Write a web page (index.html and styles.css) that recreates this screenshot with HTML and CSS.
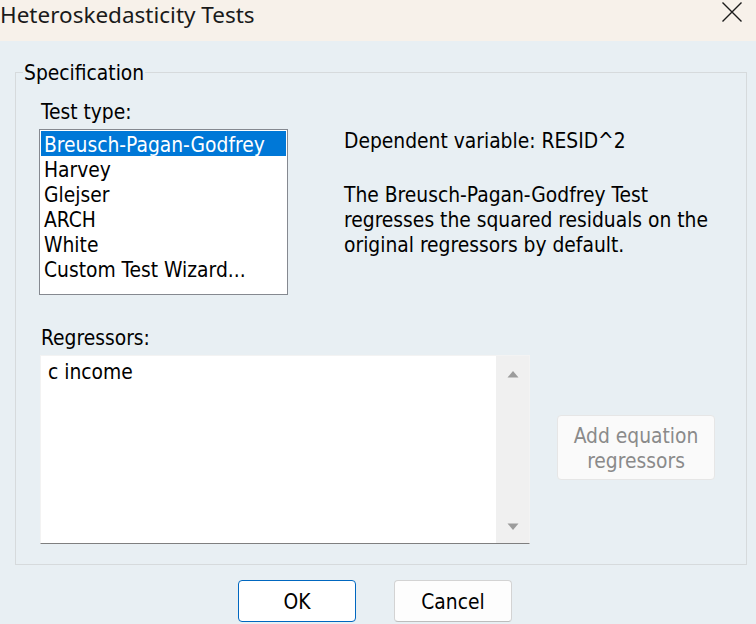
FILE: index.html
```html
<!DOCTYPE html>
<html lang="en">
<head>
<meta charset="utf-8">
<title>Heteroskedasticity Tests</title>
<link rel="stylesheet" href="styles.css">
</head>
<body>
<div class="window">
  <div class="titlebar">
    <span class="title">Heteroskedasticity Tests</span>
    <button class="close" aria-label="Close">
      <svg width="20" height="20" viewBox="0 0 20 20"><path d="M0.5 0.5L19.5 19.5M19.5 0.5L0.5 19.5" stroke="#1b1b1b" stroke-width="1.4" fill="none"/></svg>
    </button>
  </div>
  <div class="dialog">
    <fieldset class="group">
      <legend>Specification</legend>
      <div class="group-body">
        <div class="top-row">
          <div class="test-col">
            <div class="label">Test type:</div>
            <ul class="listbox">
              <li class="selected">Breusch-Pagan-Godfrey</li>
              <li>Harvey</li>
              <li>Glejser</li>
              <li>ARCH</li>
              <li>White</li>
              <li>Custom Test Wizard...</li>
            </ul>
          </div>
          <div class="desc">
            <p>Dependent variable: RESID^2</p>
            <p class="para">The Breusch-Pagan-Godfrey Test<br>regresses the squared residuals on the<br>original regressors by default.</p>
          </div>
        </div>
        <div class="label reg-label">Regressors:</div>
        <div class="reg-row">
          <div class="textbox">
            <div class="text">c income</div>
            <div class="scrollbar">
              <svg width="12" height="8" viewBox="0 0 12 8"><path d="M0.5 7.5L6 1L11.5 7.5Z" fill="#9c9c9c"/></svg>
              <svg width="12" height="8" viewBox="0 0 12 8"><path d="M0.5 0.5L6 7L11.5 0.5Z" fill="#9c9c9c"/></svg>
            </div>
          </div>
          <button class="add-btn" disabled>Add equation<br>regressors</button>
        </div>
      </div>
    </fieldset>
    <div class="buttons">
      <button class="btn primary">OK</button>
      <button class="btn">Cancel</button>
    </div>
  </div>
</div>
</body>
</html>
```
FILE: styles.css
```css
* { box-sizing: border-box; }
html, body { margin: 0; padding: 0; }
body {
  width: 756px;
  height: 624px;
  overflow: hidden;
  background: #e8eff3;
  font-family: "DejaVu Sans Condensed", "DejaVu Sans", sans-serif;
  font-stretch: condensed;
  font-size: 20.8px;
  line-height: 25px;
  color: #000;
}
.window { width: 756px; height: 624px; display: flex; flex-direction: column; }
.titlebar {
  height: 41px;
  background: #f7f1ea;
  display: flex;
  align-items: flex-start;
  justify-content: space-between;
  flex-shrink: 0;
}
.title {
  font-family: "Noto Sans", "Open Sans", sans-serif;
  font-stretch: normal;
  font-size: 22.5px;
  line-height: 30px;
  color: #1a1a1a;
  white-space: nowrap;
}
.close {
  border: 0;
  background: transparent;
  padding: 0;
  margin: 2px 14px 0 0;
  width: 20px;
  height: 20px;
  display: block;
}
.close svg { display: block; }
.dialog {
  flex: 1;
  background: #e8eff3;
  padding: 18px 9px 0 15px;
}
.group {
  margin: 0;
  padding: 0 0 0 7px;
  border: 1px solid #d6dadc;
  min-width: 0;
}
.group legend {
  padding: 2px 1px 0 1px;
  line-height: 25px;
}
.group-body {
  padding: 14px 31px 20px 16px;
}
.top-row { display: flex; align-items: flex-start; }
.test-col { width: 249px; flex-shrink: 0; }
.label { margin-left: 2px; }
.listbox {
  list-style: none;
  margin: 4px 0 0 0;
  padding: 1px;
  height: 166px;
  border: 1px solid #858990;
  background: #fff;
}
.listbox li { padding: 3px 0 0 3px; height: 25px; line-height: 22px; white-space: nowrap; }
.listbox li.selected { background: #0078d7; color: #fff; }
.desc { margin-left: 56px; padding-top: 29px; }
.desc p { margin: 0; white-space: nowrap; }
.desc .para { margin-top: 29px; }
.reg-label { margin-top: 31px; }
.reg-row { display: flex; align-items: flex-start; margin-top: 4px; }
.textbox {
  width: 490px;
  height: 189px;
  margin-left: 1px;
  background: #fff;
  border: 1px solid #f3f3f3;
  border-bottom: 1px solid #7f7f7f;
  display: flex;
}
.textbox .text { flex: 1; padding: 4px 0 0 7px; }
.scrollbar {
  width: 33px;
  background: #f0f0f0;
  display: flex;
  flex-direction: column;
  align-items: center;
  justify-content: space-between;
  padding: 14px 0 12px 0;
}
.scrollbar svg { display: block; }
.add-btn {
  margin: 60px 0 0 27px;
  width: 158px;
  height: 65px;
  border: 1px solid #e6e6e6;
  border-radius: 4px;
  background: #fafafa;
  color: #8a8a8a;
  font: inherit;
  line-height: 25px;
  padding: 3px 0 0 0;
}
.buttons {
  display: flex;
  justify-content: center;
  gap: 38px;
  margin-top: 15px;
  padding-right: 12px;
}
.btn {
  width: 118px;
  height: 42px;
  border-radius: 4px;
  background: #fdfdfd;
  border: 1px solid #d3d3d3;
  border-bottom-color: #bdbdbd;
  font: inherit;
  color: #000;
  padding: 3px 0 0 0;
}
.btn.primary { border: 1px solid #0067c0; background: #fff; }
```
